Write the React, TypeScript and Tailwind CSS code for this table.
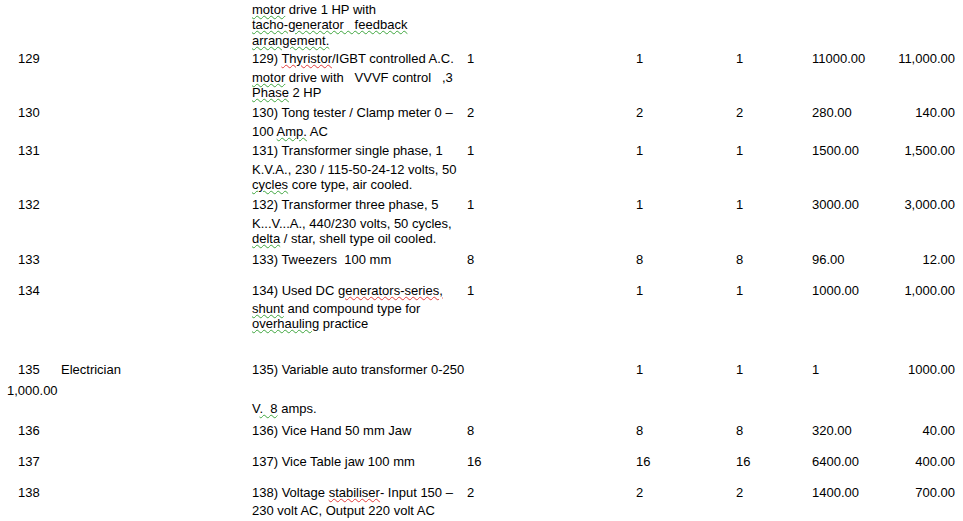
import type { ReactNode } from 'react';

// squiggle underline like a word processor's spell / grammar check
function Sq({ children, red = false }: { children: ReactNode; red?: boolean }) {
    return (
        <span
            className={
                red
                    ? 'underline decoration-wavy decoration-1 decoration-[#e23b3b] underline-offset-[1px]'
                    : 'underline decoration-wavy decoration-1 decoration-[#3fa63f] underline-offset-[1px]'
            }
        >
            {children}
        </span>
    );
}

type Row = {
    no: string;
    trade?: string;
    lines: ReactNode[];
    gaps: string[]; // margin-top class for each line after the first
    qty?: string;
    a: string;
    b: string;
    rate: string;
    total: string;
    h: string;
};

const rows: Row[] = [
    {
        no: '129',
        lines: [
            <>129) <Sq red>Thyristor</Sq>/IGBT controlled A.C.</>,
            <><Sq>motor</Sq> drive with   VVVF control   ,3</>,
            <><Sq>Phase</Sq> 2 HP</>,
        ],
        gaps: ['mt-[4px]', 'mt-0'],
        qty: '1',
        a: '1',
        b: '1',
        rate: '11000.00',
        total: '11,000.00',
        h: 'h-[54px]',
    },
    {
        no: '130',
        lines: [<>130) Tong tester / Clamp meter 0 –</>, <>100 <Sq>Amp.</Sq> AC</>],
        gaps: ['mt-[4px]'],
        qty: '2',
        a: '2',
        b: '2',
        rate: '280.00',
        total: '140.00',
        h: 'h-[38px]',
    },
    {
        no: '131',
        lines: [
            <>131) Transformer single phase, 1</>,
            <>K.V.A., 230 / 115-50-24-12 volts, 50</>,
            <><Sq>cycles</Sq> core type, air cooled.</>,
        ],
        gaps: ['mt-[4px]', 'mt-0'],
        qty: '1',
        a: '1',
        b: '1',
        rate: '1500.00',
        total: '1,500.00',
        h: 'h-[54px]',
    },
    {
        no: '132',
        lines: [
            <>132) Transformer three phase, 5</>,
            <>K...V...A., 440/230 volts, 50 cycles,</>,
            <><Sq>delta</Sq> / star, shell type oil cooled.</>,
        ],
        gaps: ['mt-[4px]', 'mt-0'],
        qty: '1',
        a: '1',
        b: '1',
        rate: '3000.00',
        total: '3,000.00',
        h: 'h-[55px]',
    },
    {
        no: '133',
        lines: [<>133) Tweezers  100 mm</>],
        gaps: [],
        qty: '8',
        a: '8',
        b: '8',
        rate: '96.00',
        total: '12.00',
        h: 'h-[31px]',
    },
    {
        no: '134',
        lines: [
            <>134) Used DC <Sq red>generators-series,</Sq></>,
            <><Sq>shunt</Sq> and compound type for</>,
            <><Sq>overhauling</Sq> practice</>,
        ],
        gaps: ['mt-[3px]', 'mt-0'],
        qty: '1',
        a: '1',
        b: '1',
        rate: '1000.00',
        total: '1,000.00',
        h: 'h-[79px]',
    },
];

const tail: Row[] = [
    {
        no: '136',
        lines: [<>136) Vice Hand 50 mm Jaw</>],
        gaps: [],
        qty: '8',
        a: '8',
        b: '8',
        rate: '320.00',
        total: '40.00',
        h: 'h-[31px]',
    },
    {
        no: '137',
        lines: [<>137) Vice Table jaw 100 mm</>],
        gaps: [],
        qty: '16',
        a: '16',
        b: '16',
        rate: '6400.00',
        total: '400.00',
        h: 'h-[31px]',
    },
    {
        no: '138',
        lines: [<>138) Voltage <Sq red>stabiliser</Sq>- Input 150 –</>, <>230 volt AC, Output 220 volt AC</>],
        gaps: ['mt-[3px]'],
        qty: '2',
        a: '2',
        b: '2',
        rate: '1400.00',
        total: '700.00',
        h: 'h-[36px]',
    },
];

const grid = 'grid grid-cols-[61px_191px_215px_169px_100px_76px_68px_75px]';

function ItemRow({ row }: { row: Row }) {
    return (
        <div className={`${grid} ${row.h}`}>
            <div className="pl-[18px]">{row.no}</div>
            <div>{row.trade ?? ''}</div>
            <div className="flex flex-col">
                {row.lines.map((line, i) => (
                    <div key={i} className={`whitespace-pre ${i > 0 ? row.gaps[i - 1] : ''}`}>
                        {line}
                    </div>
                ))}
            </div>
            <div>{row.qty ?? ''}</div>
            <div>{row.a}</div>
            <div>{row.b}</div>
            <div>{row.rate}</div>
            <div className="text-right">{row.total}</div>
        </div>
    );
}

export default function App() {
    return (
        <div className="min-h-[521px] overflow-hidden bg-white pt-[2px] font-['Liberation_Sans',Arial,sans-serif] text-[13px] leading-[15px] text-black">
            {/* tail end of item 128 from the previous page */}
            <div className={`${grid} h-[49px]`}>
                <div className="col-start-3 flex flex-col whitespace-pre">
                    <div><Sq>motor</Sq> drive 1 HP with</div>
                    <div><Sq>tacho-generator   feedback</Sq></div>
                    <div className="mt-px"><Sq>arrangement.</Sq></div>
                </div>
            </div>

            {rows.map((row) => (
                <ItemRow key={row.no} row={row} />
            ))}

            {/* row 135 spills its total onto the next line */}
            <div className="flex h-[61px] flex-col">
                <div className={grid}>
                    <div className="pl-[18px]">135</div>
                    <div>Electrician</div>
                    <div className="whitespace-pre">135) Variable auto transformer 0-250</div>
                    <div></div>
                    <div>1</div>
                    <div>1</div>
                    <div>1</div>
                    <div className="text-right">1000.00</div>
                </div>
                <div className="mt-[6px] pl-[7px]">1,000.00</div>
                <div className={`${grid} mt-[3px]`}>
                    <div className="col-start-3 whitespace-pre">
                        V<Sq>.  8</Sq> amps.
                    </div>
                </div>
            </div>

            {tail.map((row) => (
                <ItemRow key={row.no} row={row} />
            ))}
        </div>
    );
}
